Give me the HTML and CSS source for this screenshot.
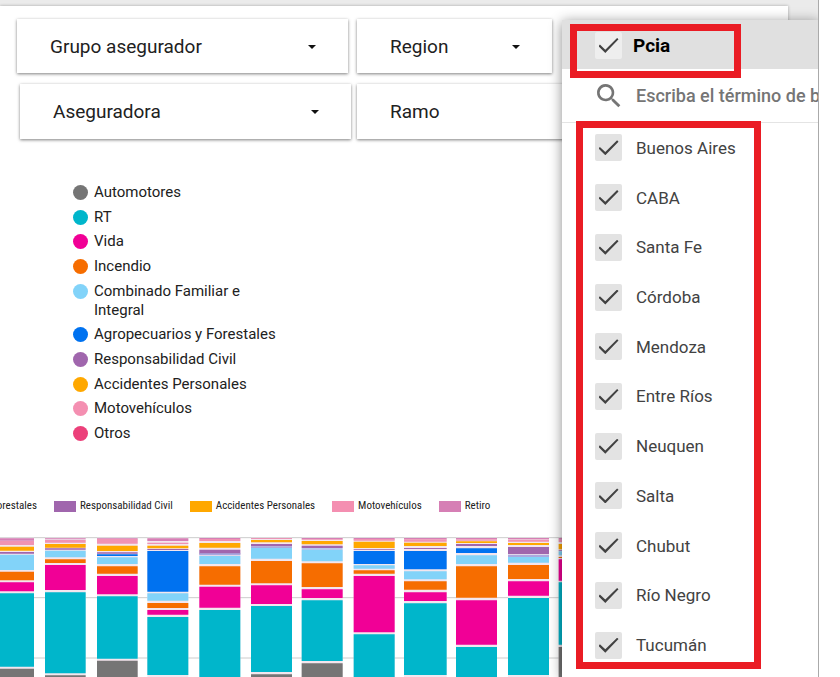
FILE: index.html
```html
<!DOCTYPE html>
<html lang="es">
<head>
<meta charset="utf-8">
<title>Seguros por provincia</title>
<link rel="stylesheet" href="styles.css">
</head>
<body>
<div class="viewport">
  <main class="report">
    <div class="filters">
      <div class="filter"><select aria-label="Grupo asegurador"><option>Grupo asegurador</option></select><svg class="caret" viewBox="0 0 8 4"><path d="M0 0h8L4 4z"/></svg></div>
      <div class="filter"><select aria-label="Region"><option>Region</option></select><svg class="caret" viewBox="0 0 8 4"><path d="M0 0h8L4 4z"/></svg></div>
    </div>
    <div class="filters filters-second">
      <div class="filter"><select aria-label="Aseguradora"><option>Aseguradora</option></select><svg class="caret" viewBox="0 0 8 4"><path d="M0 0h8L4 4z"/></svg></div>
      <div class="filter"><select aria-label="Ramo"><option>Ramo</option></select></div>
    </div>

    <ul class="legend">
      <li><i class="dot gray"></i>Automotores</li>
      <li><i class="dot teal"></i>RT</li>
      <li><i class="dot magenta"></i>Vida</li>
      <li><i class="dot orange"></i>Incendio</li>
      <li><i class="dot sky"></i>Combinado Familiar e<br>Integral</li>
      <li><i class="dot blue"></i>Agropecuarios y Forestales</li>
      <li><i class="dot purple"></i>Responsabilidad Civil</li>
      <li><i class="dot amber"></i>Accidentes Personales</li>
      <li><i class="dot pink"></i>Motovehículos</li>
      <li><i class="dot rose"></i>Otros</li>
    </ul>

    <ul class="series">
      <li class="series-first">orestales</li>
      <li><i class="swatch purple"></i>Responsabilidad Civil</li>
      <li><i class="swatch amber"></i>Accidentes Personales</li>
      <li><i class="swatch pink"></i>Motovehículos</li>
      <li><i class="swatch mauve"></i>Retiro</li>
    </ul>

    <svg class="chart" width="568" height="147" viewBox="0 120 1704 441" role="img" aria-label="Barras apiladas por ramo">
      <path class="grid" d="M0 143H1704M0 323H1704M0 504H1704"/>
      <path class="halo" d="M0 143h102v418H0zM135 143h122v418H135zM291 143h122v418H291zM442 143h123v418H442zM598 143h123v418H598zM753 143h123v418H753zM905 143h123v418H905zM1061 143h123v418H1061zM1212 143h128v418H1212zM1368 143h123v418H1368zM1524 143h123v418H1524zM1676 143h28v418H1676z"/>
      <path class="mauve" d="M0 145h102v7H0zM135 145h122v3H135zM291 145h122v3H291zM442 145h123v8H442zM598 144h123v3H598zM753 144h123v2H753zM905 144h123v3H905zM1061 144h123v4H1061zM1212 144h128v4H1212zM1368 144h123v3H1368zM1524 144h123v4H1524zM1676 144h28v5H1676z"/>
      <path class="pink" d="M0 153h102v12H0zM135 150h122v8H135zM291 147h122v14H291zM442 158h123v4H442zM598 147h123v6H598zM753 145h123v2H753zM905 147h123v2H905zM1061 147h123v5H1061zM1212 148h128v7H1212zM1368 148h123v4H1368zM1524 149h123v6H1524zM1676 149h28v7H1676z"/>
      <path class="amber" d="M0 170h102v12H0zM135 162h122v11H135zM291 167h122v16H291zM442 167h123v8H442zM598 159h123v14H598zM753 150h123v7H753zM905 153h123v10H905zM1061 155h123v19H1061zM1212 158h128v10H1212zM1368 154h123v5H1368zM1524 159h123v6H1524zM1676 162h28v16H1676z"/>
      <path class="purple" d="M0 186h102v5H0zM135 175h122v4H135zM291 187h122v4H291zM442 177h123v3H442zM598 179h123v14H598zM753 162h123v7H753zM905 167h123v7H905zM1061 177h123v2H1061zM1212 174h128v3H1212zM1368 162h123v6H1368zM1524 171h123v21H1524zM1676 181h28v2H1676z"/>
      <path class="blue" d="M291 193h122v5H291zM442 183h123v122H442zM905 176h123v2H905zM1061 183h123v39H1061zM1212 183h128v55H1212zM1368 175h123v14H1368z"/>
      <path class="haze" d="M598 190h123v6H598zM753 169h123v6H753zM1524 194h123v7H1524z"/>
      <path class="sky" d="M0 194h102v46H0zM135 182h122v20H135zM291 202h122v20H291zM442 310h123v22H442zM598 198h123v24H598zM753 174h123v32H753zM905 180h123v34H905zM1061 226h123v10H1061zM1212 244h128v24H1212zM1368 196h123v26H1368zM1524 201h123v17H1524zM1676 184h28v12H1676z"/>
      <path class="orange" d="M0 245h102v26H0zM135 208h122v11H135zM291 229h122v22H291zM442 339h123v15H442zM598 229h123v55H598zM753 213h123v67H753zM905 220h123v71H905zM1061 241h123v10H1061zM1212 274h128v25H1212zM1368 229h123v94H1368zM1524 225h123v42H1524zM1676 201h28v3H1676z"/>
      <path class="magenta" d="M0 277h102v27H0zM135 225h122v75H135zM291 258h122v55H291zM442 360h123v14H442zM598 290h123v63H598zM753 286h123v56H753zM905 298h123v26H905zM1061 258h123v169H1061zM1212 307h128v26H1212zM1368 331h123v133H1368zM1524 274h123v43H1524zM1676 208h28v64H1676z"/>
      <path class="teal" d="M0 310h102v220H0zM135 307h122v243H135zM291 319h122v187H291zM442 381h123v174H442zM598 360h123v201H598zM753 348h123v198H753zM905 331h123v182H905zM1061 433h123v128H1061zM1212 340h128v215H1212zM1368 471h123v90H1368zM1524 324h123v231H1524zM1676 277h28v187H1676z"/>
      <path class="gray" d="M0 536h102v25H0zM135 556h122v5H135zM291 512h122v49H291zM753 553h123v8H753zM905 520h123v41H905zM1676 471h28v90H1676z"/>
    </svg>
  </main>

  <section class="menu">
    <label class="menu-head"><input type="checkbox" checked>Pcia</label>
    <label class="search">
      <svg viewBox="0 0 24 24"><path d="M15.5 14h-.8l-.3-.3a6.500 6.500 0 1 0-.7.7l.3.3v.8l5 5 1.500-1.500zm-6 0a4.500 4.500 0 1 1 0-9 4.500 4.500 0 0 1 0 9z"/></svg>
      <input type="text" aria-label="Buscar" placeholder="Escriba el término de búsqueda">
    </label>
    <div class="options">
      <label><input type="checkbox" checked>Buenos Aires</label>
      <label><input type="checkbox" checked>CABA</label>
      <label><input type="checkbox" checked>Santa Fe</label>
      <label><input type="checkbox" checked>Córdoba</label>
      <label><input type="checkbox" checked>Mendoza</label>
      <label><input type="checkbox" checked>Entre Ríos</label>
      <label><input type="checkbox" checked>Neuquen</label>
      <label><input type="checkbox" checked>Salta</label>
      <label><input type="checkbox" checked>Chubut</label>
      <label><input type="checkbox" checked>Río Negro</label>
      <label><input type="checkbox" checked>Tucumán</label>
    </div>
  </section>
  <div class="mark mark-head"></div>
  <div class="mark mark-list"></div>
</div>
</body>
</html>
```
FILE: styles.css
```css
* { box-sizing: border-box; }

body {
  margin: 0;
  background: #fff;
  color: #212121;
  font-family: Roboto, "Liberation Sans", sans-serif;
}

ul { margin: 0; padding: 0; list-style: none; }

.viewport {
  position: relative;
  min-height: 100vh;
  margin-right: 21px;
  padding: 6px 30px 0 0;
  background: #ebebeb;
  border-right: 1px solid #aaa;
  overflow: hidden;
}

.report {
  display: flow-root;
  min-height: calc(100vh - 6px);
  background: #fff;
  box-shadow: 0 0 3px rgba(0, 0, 0, .3);
  overflow: hidden;
}

/* Filter cards */
.filters {
  display: grid;
  grid-template-columns: 331fr 195fr 227fr;
  gap: 9px;
  margin: 13px 0 0 17px;
}

.filters-second {
  grid-template-columns: 331fr 431fr;
  gap: 6px;
  margin: 11px 0 0 20px;
}

.filter {
  display: flex;
  align-items: center;
  height: 54px;
  padding: 1px 32px 0 33px;
  background: #fff;
  box-shadow: 0 1px 3px rgba(0, 0, 0, .5);
}

.filters-second .filter { height: 55px; }

.filter select {
  flex: 1;
  min-width: 0;
  padding: 0;
  border: 0;
  background: none;
  appearance: none;
  color: #212121;
  font: 19px/24px Roboto, "Liberation Sans", sans-serif;
}

.caret { width: 8px; height: 4px; fill: #111; }

/* Pie legend */
.legend {
  display: flex;
  flex-direction: column;
  justify-content: space-between;
  height: 260px;
  margin: 44px 0 0 73px;
  font-size: 15px;
  line-height: 19px;
}

.legend li { display: flex; gap: 6px; }
.dot { flex: none; width: 15px; height: 15px; margin-top: 2px; border-radius: 50%; }

/* Bar chart */
.series {
  display: flex;
  gap: 17px;
  margin-top: 55px;
  font: 11px/16px "Roboto Condensed", "Liberation Sans Narrow", Roboto, sans-serif;
  white-space: nowrap;
}

.series li { display: flex; align-items: center; gap: 4px; }
.series .series-first { justify-content: flex-end; width: 37px; }
.swatch { width: 22px; height: 11px; }
.chart { display: block; margin-top: 16px; }
.grid { fill: none; stroke: #ccc; stroke-width: 3; }
.halo { fill: #f3e6ee; }

.gray { background: #757575; fill: #757575; }
.teal { background: #00b6cb; fill: #00b6cb; }
.magenta { background: #f10096; fill: #f10096; }
.orange { background: #f66d00; fill: #f66d00; }
.sky { background: #82d3f9; fill: #82d3f9; }
.blue { background: #0072f0; fill: #0072f0; }
.purple { background: #a066ad; fill: #a066ad; }
.amber { background: #ffa800; fill: #ffa800; }
.pink { background: #f48fb1; fill: #f093b3; }
.rose { background: #ec407a; }
.mauve { background: #d67fb5; fill: #d67fb5; }
.haze { fill: #a9a9e0; }

/* Province menu */
.menu {
  position: absolute;
  top: 20px;
  right: -1px;
  bottom: 0;
  display: flex;
  flex-direction: column;
  width: 257px;
  background: #fff;
  box-shadow: 0 2px 12px rgba(0, 0, 0, .45);
}

.menu label { display: flex; align-items: center; }

.menu-head {
  height: 49px;
  padding: 2px 0 0 33px;
  gap: 11px;
  background: #e0e0e0;
  color: #000;
  font-size: 19px;
  font-weight: 700;
}

.search {
  height: 54px;
  padding-left: 31px;
  gap: 11px;
  border-bottom: 1px solid #e4e4e4;
}

.search svg { flex: none; width: 32px; height: 32px; fill: #757575; }

.search input {
  flex: 1;
  min-width: 0;
  padding: 0;
  border: 0;
  background: none;
  font: 500 18px/24px Roboto, "Liberation Sans", sans-serif;
}

.search input::placeholder { color: #757575; opacity: 1; }

.options {
  flex: 1;
  display: grid;
  grid-auto-rows: 1fr;
  padding: 0 0 7px 33px;
  color: #424242;
  font-size: 17px;
}

.options label { gap: 14px; }

.menu input[type="checkbox"] {
  display: grid;
  place-items: center;
  flex: none;
  width: 27px;
  height: 27px;
  margin: 0;
  border-radius: 2px;
  background: #e3e3e3;
  appearance: none;
}

.menu-head input[type="checkbox"] { background: #eee; }

.menu input[type="checkbox"]::before {
  content: "";
  width: 20px;
  height: 15px;
  background: #424242;
  clip-path: polygon(0 55%, 7% 44%, 34% 78%, 93% 0, 100% 9%, 34% 100%);
}

/* Highlight frames */
.mark { position: absolute; border: 7px solid #ea1c24; pointer-events: none; }
.mark-head { top: 24px; right: 77px; width: 171px; height: 54px; }
.mark-list { top: 121px; right: 57px; bottom: 8px; width: 185px; }
```
